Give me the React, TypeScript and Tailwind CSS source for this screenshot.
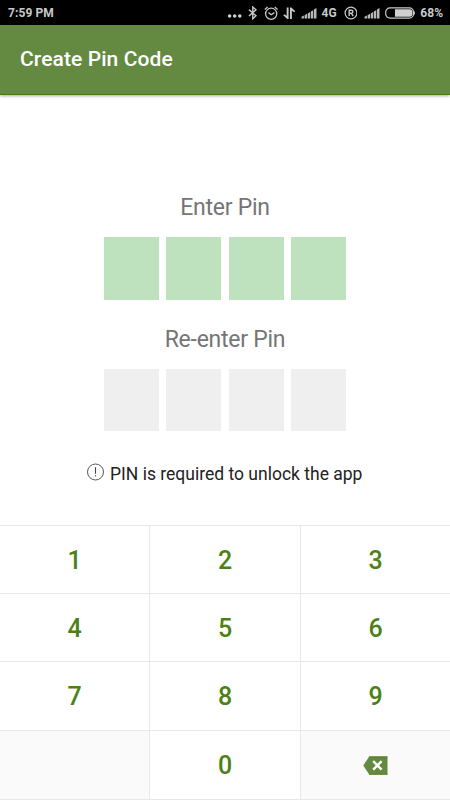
import { useState } from 'react';

const keys = ['1', '2', '3', '4', '5', '6', '7', '8', '9'];

function SignalIcon() {
  return (
    <svg width="17" height="12" viewBox="0 0 17 12" fill="#b8b8b8">
      <path d="M0.5 11.5V9.7l2.4-1.2v3z" />
      <path d="M3.6 11.5V8.2l2.4-1.4v4.7z" />
      <path d="M6.7 11.5V6.4l2.4-1.4v6.5z" />
      <path d="M9.8 11.5V4.6l2.4-1.4v8.3z" />
      <path d="M12.9 11.5V2.6l2.6-1.6v10.5z" />
    </svg>
  );
}

function StatusBar() {
  return (
    <div className="flex h-[25px] items-center bg-black pl-[8px] pr-[7px] pt-px text-[12px] font-bold text-[#c8c8c8]">
      <span className="w-[219.5px] text-[12px] tracking-[0.1px]">7:59 PM</span>
      {/* More notifications */}
      <svg width="16" height="12" viewBox="0 0 16 12" fill="#d0d0d0">
        <circle cx="2.6" cy="9" r="1.8" />
        <circle cx="7.7" cy="9" r="1.8" />
        <circle cx="12.8" cy="9" r="1.8" />
      </svg>
      {/* Bluetooth */}
      <svg className="ml-[5px]" width="10" height="14" viewBox="0 0 10 14" fill="none" stroke="#c8c8c8" strokeWidth="1.4">
        <path d="M1 3.6l7 6.2-3.2 3V1l3.2 2.8-7 6.2" />
      </svg>
      {/* Alarm */}
      <svg className="ml-[6px]" width="15" height="15" viewBox="0 0 15 15" fill="none" stroke="#c8c8c8" strokeWidth="1.3">
        <circle cx="7.2" cy="7.8" r="5.6" />
        <path d="M4.5 6.4l2.7 2.4 3.2-2.2M0.8 3.4L3.6 1M13.6 3.4L10.8 1" />
      </svg>
      {/* Mobile data */}
      <svg className="ml-[4px]" width="13" height="13" viewBox="0 0 13 13" fill="#c8c8c8">
        <path d="M5.6 0.5v11.5H4.2L0.3 8.2l1-1 2.4 1.6V0.5z" />
        <path d="M7 12V0.5h1.4l3.9 3.8-1 1-2.4-1.6V12z" />
      </svg>
      <div className="ml-[5.5px] flex">
        <SignalIcon />
      </div>
      <span className="ml-[3.5px] w-[18px] text-[12px]">4G</span>
      <svg className="ml-[4px]" width="14" height="14" viewBox="0 0 14 14" fill="none" stroke="#c8c8c8" strokeWidth="1.2">
        <circle cx="7" cy="7" r="5.9" />
        <path d="M5.2 10V4.2h2.2a1.5 1.5 0 0 1 0 3H5.2M7.3 7.2L9.2 10" strokeWidth="1.4" />
      </svg>
      <div className="ml-[6.5px] flex">
        <SignalIcon />
      </div>
      {/* Battery */}
      <svg className="ml-[4.5px]" width="31" height="12" viewBox="0 0 31 12">
        <rect x="0.7" y="0.8" width="28" height="10.4" rx="4.4" fill="none" stroke="#c8c8c8" strokeWidth="1.2" />
        <path d="M10 2.2h14.6a3 3 0 0 1 3 3v1.6a3 3 0 0 1-3 3H10z" fill="#d0d0d0" />
        <path d="M29.5 4.5v3" stroke="#c8c8c8" strokeWidth="1" />
      </svg>
      <span className="ml-[4px] text-[12px]">68%</span>
    </div>
  );
}

function PinRow({ label, active }: { label: string; active: boolean }) {
  return (
    <div className="flex flex-col items-center">
      <div className="text-[23px] leading-[28px] tracking-[-0.25px] text-[#757575]">{label}</div>
      <div className="mt-[15px] flex gap-[7.5px]">
        {[0, 1, 2, 3].map(i => (
          <div
            key={i}
            className={`h-[62.5px] w-[55px] ${active ? 'bg-[#bee2be]' : 'bg-[#efefef]'}`}
          />
        ))}
      </div>
    </div>
  );
}

export default function App() {
  const [pin, setPin] = useState('');

  const press = (key: string) => setPin((pin + key).slice(0, 8));

  return (
    <div className="flex h-[800px] w-[450px] flex-col overflow-hidden bg-white font-['Roboto',sans-serif]">
      <StatusBar />

      <header className="flex h-[70px] items-center border-b border-[#4b7a0a] bg-[#648a41] px-5 pt-px shadow-[0_1px_3px_rgba(0,0,0,0.35)]">
        <h1 className="text-[21px] font-medium tracking-[0.1px] text-white">Create Pin Code</h1>
      </header>

      <main className="flex h-[430px] flex-col items-center pt-[99px]">
        <PinRow label="Enter Pin" active />
        <div className="mt-[26px]">
          <PinRow label="Re-enter Pin" active={false} />
        </div>
        <div className="mt-[31px] flex items-center gap-[5px] text-[17.5px] leading-6 text-[#222222]">
          <svg className="-ml-[0.5px] -mt-[4px]" width="18" height="18" viewBox="0 0 18 18" fill="none" stroke="#444444" strokeWidth="0.9">
            <circle cx="8.5" cy="9" r="8" />
            <path d="M8.5 4.2v6.6M8.5 12.2v1.4" strokeWidth="1.1" />
          </svg>
          <span>PIN is required to unlock the app</span>
        </div>
      </main>

      {/* Keypad */}
      <div className="grid h-[275px] grid-cols-[149px_150px_149px] grid-rows-[67px_67px_68px_68px] gap-px border-y border-[#e8e8e8] bg-[#e8e8e8] text-[25px] font-medium text-[#4d8118]">
        {keys.map(key => (
          <button key={key} onClick={() => press(key)} className="flex items-center justify-center bg-white pt-[2px]">
            {key}
          </button>
        ))}
        <div className="bg-[#fafafa]" />
        <button onClick={() => press('0')} className="flex items-center justify-center bg-white pt-[2px]">
          0
        </button>
        <button
          aria-label="Delete"
          onClick={() => setPin(pin.slice(0, -1))}
          className="flex items-center justify-center bg-[#fafafa]"
        >
          <svg width="25" height="19" viewBox="0 0 25 19">
            <path d="M6.2 0.5H24.5V18.5H6.2L0.3 9.5z" fill="#648a41" />
            <path d="M6 0.9H24.5M6 18.3H24.5" stroke="#4b7a0a" strokeWidth="0.8" />
            <path d="M10.2 5.2l8.4 8.4M18.6 5.2l-8.4 8.4" stroke="#ffffff" strokeWidth="2.4" />
          </svg>
        </button>
      </div>
    </div>
  );
}
